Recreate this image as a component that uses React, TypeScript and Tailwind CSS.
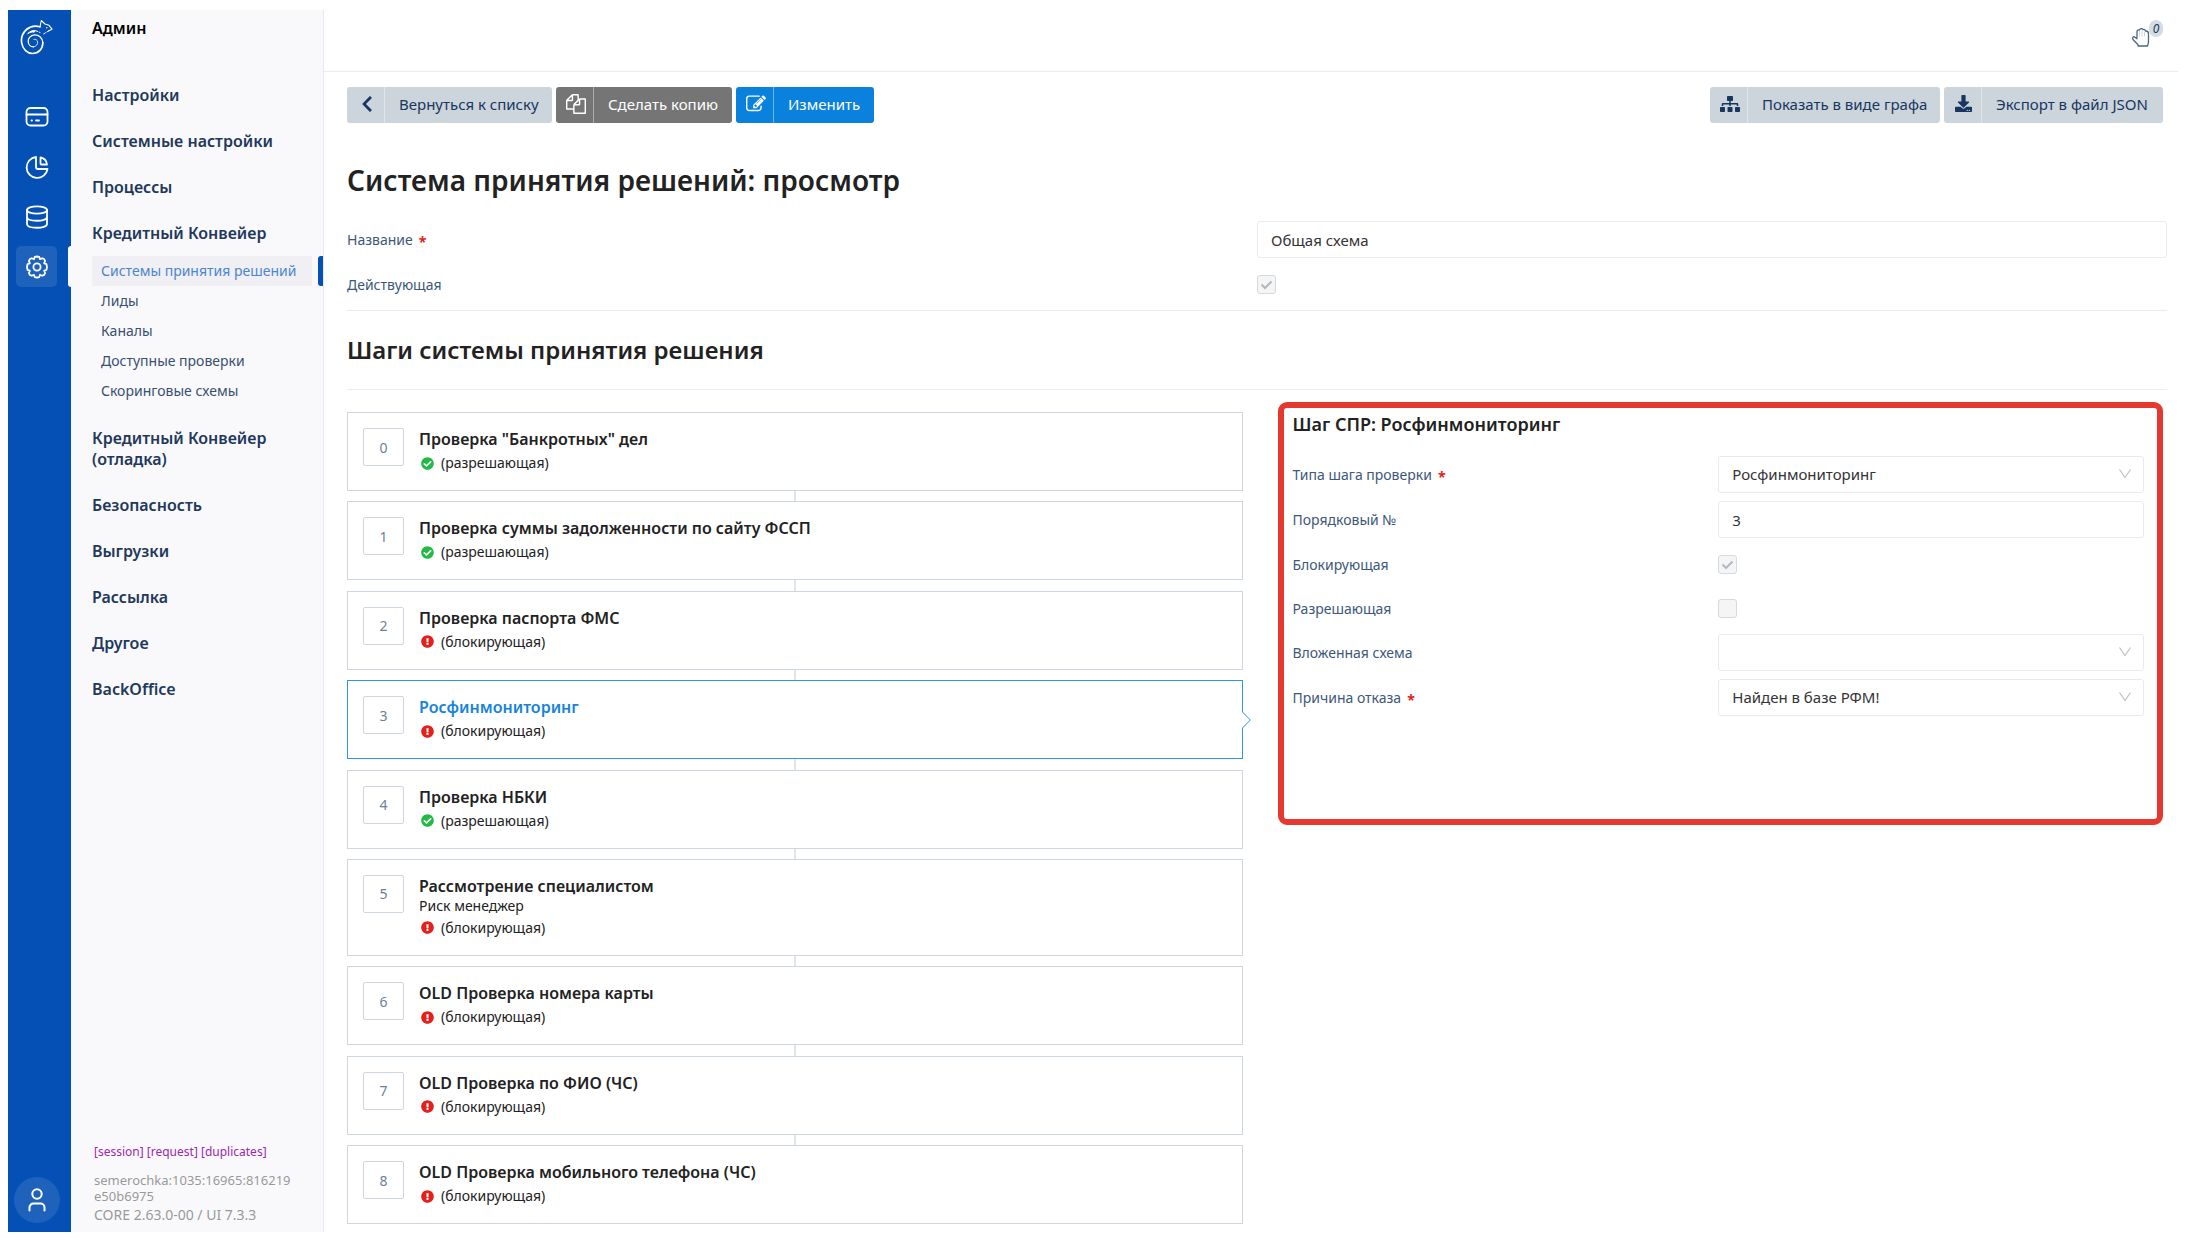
import React from 'react';
import { FaChevronLeft, FaSitemap, FaDownload, FaCheckCircle, FaExclamationCircle } from 'react-icons/fa';

const menu = [
  { title: 'Настройки' },
  { title: 'Системные настройки' },
  { title: 'Процессы' },
  {
    title: 'Кредитный Конвейер',
    items: ['Системы принятия решений', 'Лиды', 'Каналы', 'Доступные проверки', 'Скоринговые схемы']
  },
  { title: 'Кредитный Конвейер (отладка)' },
  { title: 'Безопасность' },
  { title: 'Выгрузки' },
  { title: 'Рассылка' },
  { title: 'Другое' },
  { title: 'BackOffice' }
];

const steps = [
  { title: 'Проверка "Банкротных" дел', blocking: false },
  { title: 'Проверка суммы задолженности по сайту ФССП', blocking: false },
  { title: 'Проверка паспорта ФМС', blocking: true },
  { title: 'Росфинмониторинг', blocking: true },
  { title: 'Проверка НБКИ', blocking: false },
  { title: 'Рассмотрение специалистом', role: 'Риск менеджер', blocking: true },
  { title: 'OLD Проверка номера карты', blocking: true },
  { title: 'OLD Проверка по ФИО (ЧС)', blocking: true },
  { title: 'OLD Проверка мобильного телефона (ЧС)', blocking: true }
];

const selectedStep = 3;

const Logo = () => (
  <svg viewBox="0 0 34 36" className="h-9 w-[34px]" fill="none" stroke="white" strokeLinecap="round" strokeLinejoin="round">
    <path strokeWidth="1.7" d="M20 7.800C16 6.600 10.500 7 6.500 10.500C2.500 14 1 18.500 1.600 23.500C2.600 30.500 7.500 34.500 12.500 34.500C18.500 34.300 23 30 22.800 23.500" />
    <path strokeWidth="1.3" d="M22.800 23.500C22.500 18.500 18.500 15.500 14.500 15.800C10.500 16.200 8 19.300 8.200 22.500C8.500 26 11 28 13.500 27.800" />
    <path strokeWidth="0.8" d="M13.500 27.800C16.500 27.400 18 25.200 17.600 22.800C17.200 20.800 15.500 19.800 13.800 20.300" />
    <path strokeWidth="1" fill="white" d="M8 14.500C10 12 13 11 15.500 11.800L14 13.200C12 12.600 10 13.200 8 14.500z" />
    <path strokeWidth="1.100" d="M20 7.800L21.300 1.500L25 5L29 6.300L32 10.200L28.500 12" />
    <path strokeWidth="1" strokeDasharray="2 1.600" d="M28.500 12L23.500 15M16 11.800L20 13.500" />
    <circle cx="26.800" cy="8.800" r=".7" fill="white" stroke="none" />
  </svg>
);

const CopyIcon = () => (
  <svg viewBox="0 0 1792 1792" className="h-5 w-5" fill="currentColor">
    <path d="M1696 384q40 0 68 28t28 68v1216q0 40-28 68t-68 28h-960q-40 0-68-28t-28-68v-288h-544q-40 0-68-28t-28-68v-672q0-40 20-88t48-76l408-408q28-28 76-48t88-20h416q40 0 68 28t28 68v328q68-40 128-40h416zm-544 213l-299 299h299v-299zm-640-384l-299 299h299v-299zm196 647l316-316v-416h-384v416q0 40-28 68t-68 28h-416v640h512v-256q0-40 20-88t48-76zm956 804v-1152h-384v416q0 40-28 68t-68 28h-416v640h896z" />
  </svg>
);

const EditIcon = () => (
  <svg viewBox="0 0 1792 1792" className="h-5 w-5" fill="currentColor">
    <path d="M888 1184l116-116-152-152-116 116v56h96v96h56zm440-720q-16-16-33 1l-350 350q-17 17-1 33t33-1l350-350q17-17 1-33zm80 594v190q0 119-84.5 203.5t-203.5 84.5h-832q-119 0-203.5-84.5t-84.5-203.5v-832q0-119 84.5-203.5t203.5-84.5h832q63 0 117 25 15 7 18 23 3 17-9 29l-49 49q-14 14-32 8-23-6-45-6h-832q-66 0-113 47t-47 113v832q0 66 47 113t113 47h832q66 0 113-47t47-113v-126q0-13 9-22l64-64q15-15 35-7t20 29zm-96-738l288 288-672 672h-288v-288zm444 132l-92 92-288-288 92-92q28-28 68-28t68 28l152 152q28 28 28 68t-28 68z" />
  </svg>
);

const HandIcon = () => (
  <svg viewBox="0 0 20 20" className="h-5 w-5" fill="none" strokeLinejoin="round" strokeLinecap="round">
    <path strokeWidth="0.8" stroke="#c3ccd6" d="M8.500 4.500V9M11 4V9M13.500 5V9" />
    <path strokeWidth="1.3" stroke="#4a6785" d="M6 10.500V4.500C6 3.200 7.500 2.800 8.500 3C9 1.300 11.200 1.300 11.800 2.600C13 2.200 14.300 2.800 14.500 4C16 4 17.500 4.800 17.500 6.500V14C17.500 16 17 17 16.500 19H7V17.800L2 12.500C.8 10.500 2.500 9 4 10.200L6 11.800" />
  </svg>
);

const railIcons = [
  {
    label: 'Заявки',
    path: (
      <>
        <rect x="1.500" y="3" width="21" height="17.500" rx="4" />
        <path d="M1.500 9.500h21M6.500 15.500h.5M11 15.500h3" />
      </>
    )
  },
  {
    label: 'Отчёты',
    path: (
      <>
        <path d="M11 2A10.500 10.500 0 1 0 22.500 14H13a2 2 0 0 1-2-2z" />
        <path d="M15.500 2.500A8 8 0 0 1 22 9.500h-5.500a1 1 0 0 1-1-1z" />
      </>
    )
  },
  {
    label: 'Данные',
    path: (
      <>
        <ellipse cx="12" cy="5" rx="10" ry="3.700" />
        <path d="M2 5v14c0 5 20 5 20 0V5M2 12c0 5 20 5 20 0" />
      </>
    )
  },
  {
    label: 'Админ',
    path: (
      <>
        <circle cx="12" cy="12" r="3.600" />
        <path d="M12 1.500l2.300.4.700 2.300 2.200-1 2 .9.900 2-1 2.200 2.300.7.600 3-.600 3-2.300.7 1 2.200-.9 2-2 .9-2.200-1-.7 2.300-2.300.4-2.300-.4-.7-2.300-2.200 1-2-.9-.9-2 1-2.200-2.300-.7-.6-3 .6-3 2.300-.7-1-2.200.9-2 2-.9 2.200 1 .7-2.300z" />
      </>
    )
  }
];

const Rail = () => (
  <nav className="flex w-[63px] shrink-0 flex-col items-start bg-[#0450b4] pt-[9px] pb-[9px]">
    <a href="#" aria-label="Главная" className="ml-3"><Logo /></a>
    <div className="mt-[41px] flex w-full flex-col gap-[9px]">
      {railIcons.map((icon) => (
        <div key={icon.label} className="flex pl-2">
          <a
            href="#"
            aria-label={icon.label}
            className={`flex h-[41px] w-[41px] items-center justify-center rounded-[5px] ${icon.label === 'Админ' ? 'bg-[#1e62bc]' : ''}`}>
            <svg viewBox="0 0 24 24" className="h-6 w-6" fill="none" stroke="white" strokeWidth="1.800" strokeLinecap="round" strokeLinejoin="round">
              {icon.path}
            </svg>
          </a>
          {icon.label === 'Админ' && <span className="ml-auto w-[3px] rounded-l-[3px] bg-[#f9f9fc]" />}
        </div>
      ))}
    </div>
    <a href="#" aria-label="Профиль" className="mt-auto ml-[6px] flex h-[46px] w-[46px] items-center justify-center rounded-full bg-[#1e62bc]">
      <svg viewBox="0 0 18 24" className="h-6 w-[18px]" fill="none" stroke="white" strokeWidth="2" strokeLinecap="round">
        <circle cx="9" cy="6" r="4.700" />
        <path d="M1.500 22.500v-3a4 4 0 0 1 4-4h7a4 4 0 0 1 4 4v3" />
      </svg>
    </a>
  </nav>
);

const Sidebar = () => (
  <aside className="flex w-[253px] shrink-0 flex-col border-r border-[#e8e8f2] bg-[#f9f9fc] pl-[21px]">
    <h2 className="mt-2 text-[16px] leading-[21px] font-semibold text-black">Админ</h2>
    <ul className="mt-[46px] flex flex-col gap-[25px] text-[16px] leading-[21px] font-semibold text-[#22385a]">
      {menu.map((group) => (
        <li key={group.title}>
          <a href="#" className="block w-[200px]">{group.title}</a>
          {group.items &&
          <ul className="mt-3 -mb-[3px] text-[14px] leading-[30px] font-normal text-[#3a5070]">
            {group.items.map((item, i) => (
              <li key={item} className="flex justify-between">
                <a href="#" className={`w-[220px] pl-[9px] whitespace-nowrap ${i === 0 ? 'bg-[#efeff4] text-[#4b86cf]' : ''}`}>{item}</a>
                {i === 0 && <span className="w-[5px] rounded-l-[3px] bg-[#0450b4]" />}
              </li>
            ))}
          </ul>
          }
        </li>
      ))}
    </ul>
    <div className="mt-auto pb-[9px] pl-[2px] text-[13px] leading-4 text-[#999]">
      <p className="mb-3 text-[12px] text-[#9c27b0]">
        <a href="#">[session]</a> <a href="#">[request]</a> <a href="#">[duplicates]</a>
      </p>
      <p>semerochka:1035:16965:816219<br />e50b6975</p>
      <p className="mt-[3px] text-[14px]">CORE 2.63.0-00 / UI 7.3.3</p>
    </div>
  </aside>
);

type ActionProps = { icon: React.ReactNode; children: string; className: string };

const Action = ({ icon, children, className }: ActionProps) => (
  <button type="button" className={`flex h-9 items-stretch overflow-hidden rounded-[3px] text-[15px] whitespace-nowrap ${className}`}>
    <span className="flex w-[38px] items-center justify-center border-r border-white/40 pb-[3px] pl-[2px]">{icon}</span>
    <span className="flex grow items-center pb-[2px] pl-[14px]">{children}</span>
  </button>
);

type RowProps = { id: string; label: string; required?: boolean; children: React.ReactNode };

const Row = ({ id, label, required, children }: RowProps) => (
  <div className="grid grid-cols-2 items-center">
    <label htmlFor={id} className="text-[14px] text-[#3d5878]">
      {label}
      {required && <span className="ml-[6px] align-[-2px] leading-none font-bold text-[#e3201b]">*</span>}
    </label>
    {children}
  </div>
);

const TextField = ({ id, value }: { id: string; value: string }) => (
  <input id={id} type="text" readOnly value={value} className="h-[37px] w-full rounded-[3px] border border-[#e6ebf0] bg-white px-[13px] text-[15px] text-[#333]" />
);

const SelectField = ({ id, value }: { id: string; value: string }) => (
  <div className="relative">
    <select id={id} defaultValue={value} className="block h-[37px] w-full appearance-none rounded-[3px] border border-[#e6ebf0] bg-white px-[13px] text-[15px] text-[#333]">
      <option>{value}</option>
    </select>
    <svg viewBox="0 0 12 10" className="pointer-events-none absolute top-[13px] right-[13px] h-[10px] w-3" fill="none" stroke="#bfbfbf" strokeWidth="1.200">
      <path d="M.5.5L6 8.500L11.500.5" />
    </svg>
  </div>
);

const CheckField = ({ id, checked }: { id: string; checked: boolean }) => (
  <div className="flex h-9 items-center">
    <span className="relative flex">
      <input id={id} type="checkbox" disabled defaultChecked={checked} className="h-[19px] w-[19px] appearance-none rounded-[3px] border border-[#d9d9d9] bg-[#f4f5f7]" />
      {checked &&
      <svg viewBox="0 0 19 19" className="pointer-events-none absolute inset-0 h-[19px] w-[19px]" fill="none" stroke="#b5b8bc" strokeWidth="2">
        <path d="M4.500 9.500L8 13L14.500 6.500" />
      </svg>
      }
    </span>
  </div>
);

type StepProps = { index: number; step: (typeof steps)[number] };

const StepCard = ({ index, step }: StepProps) => {
  const active = index === selectedStep;
  return (
    <div className={`relative flex gap-[15px] border px-[15px] pt-[15px] pb-4 ${active ? 'border-[#2e96e0]' : 'border-[#ced6df]'}`}>
      <span className="flex h-[38px] w-[41px] shrink-0 items-center justify-center rounded-[2px] border border-[#ced6df] text-[14px] text-[#6b8199]">
        {index}
      </span>
      <div>
        <h3 className={`text-[16px] leading-[22px] font-semibold ${active ? 'text-[#1683dc]' : 'text-[#222]'}`}>{step.title}</h3>
        {step.role && <p className="text-[14px] leading-[18px] text-[#222]">{step.role}</p>}
        <p className="flex items-center gap-[7px] pt-[3px] pb-px pl-[2px] text-[14px] leading-5 text-[#222]">
          {step.blocking ?
          <FaExclamationCircle className="h-[13px] w-[13px] text-[#e3201b]" /> :
          <FaCheckCircle className="h-[13px] w-[13px] text-[#21ba45]" />}
          {step.blocking ? '(блокирующая)' : '(разрешающая)'}
        </p>
      </div>
      {active &&
      <svg viewBox="0 0 9 16" className="absolute top-1/2 -right-[9px] -mt-2 h-4 w-[9px]" fill="white" stroke="#2e96e0">
        <path stroke="none" d="M0 0h1v16h-1z" />
        <path d="M.5 0L8.300 8L.5 16" />
      </svg>
      }
    </div>
  );
};

export default function App() {
  return (
    <div className="flex min-h-screen bg-white pt-[10px] pr-[14px] pb-2 pl-2 font-['Noto_Sans',sans-serif]">
      <Rail />
      <Sidebar />
      <main className="flex min-w-0 grow flex-col">
        <header className="flex h-[62px] items-start justify-end border-b border-[#e9eeee] pt-[10px] pr-[15px]">
          <button type="button" aria-label="Поднятые руки" className="flex">
            <span className="pt-[7px]"><HandIcon /></span>
            <span className="-ml-[2px] flex h-[17px] w-[14px] items-center justify-center rounded-full bg-[#d5dce4] text-[12px] italic text-[#22385a]">0</span>
          </button>
        </header>
        <div className="flex grow flex-col pt-[15px] pr-[11px] pb-2 pl-[23px]">
          <div className="flex gap-1 pr-1">
            <Action icon={<FaChevronLeft className="h-[18px] w-4" />} className="w-[205px] bg-[#ccd4dc] text-[#17375e]">Вернуться к списку</Action>
            <Action icon={<CopyIcon />} className="w-[176px] bg-[#757575] text-white">Сделать копию</Action>
            <Action icon={<EditIcon />} className="w-[138px] bg-[#0a82dd] text-white">Изменить</Action>
            <span className="grow" />
            <Action icon={<FaSitemap className="h-4 w-5" />} className="w-[230px] bg-[#ccd4dc] text-[#17375e]">Показать в виде графа</Action>
            <Action icon={<FaDownload className="h-[17px] w-[17px]" />} className="w-[219px] bg-[#ccd4dc] text-[#17375e]">Экспорт в файл JSON</Action>
          </div>

          <h1 className="mt-[39px] text-[28px] leading-9 font-semibold text-[#222]">Система принятия решений: просмотр</h1>
          <div className="mt-[23px] flex flex-col gap-2 border-b border-[#e6ecf2] pb-2">
            <Row id="name" label="Название" required><TextField id="name" value="Общая схема" /></Row>
            <Row id="active" label="Действующая"><CheckField id="active" checked /></Row>
          </div>

          <h2 className="border-b border-[#e9eeee] pt-[23px] pb-[23px] text-[24px] leading-8 font-semibold text-[#222]">Шаги системы принятия решения</h2>

          <div className="grid grow grid-cols-[897fr_885fr] gap-[35px] pt-3 pr-1">
            <div className="flex flex-col pt-[10px]">
              {steps.map((step, i) => (
                <React.Fragment key={step.title}>
                  {i > 0 && <span className="min-h-2 w-[2px] grow self-center bg-[#dfe5ea]" />}
                  <StepCard index={i} step={step} />
                </React.Fragment>
              ))}
            </div>
            <section className="h-[423px] rounded-[9px] border-[6px] border-[#e5392f] pt-1 pr-[13px] pl-2">
              <h3 className="text-[18px] leading-6 font-semibold text-[#222]">Шаг СПР: Росфинмониторинг</h3>
              <div className="mt-5 flex flex-col gap-2">
                <Row id="type" label="Типа шага проверки" required><SelectField id="type" value="Росфинмониторинг" /></Row>
                <Row id="order" label="Порядковый №"><TextField id="order" value="3" /></Row>
                <Row id="blocking" label="Блокирующая"><CheckField id="blocking" checked /></Row>
                <Row id="allowing" label="Разрешающая"><CheckField id="allowing" checked={false} /></Row>
                <Row id="nested" label="Вложенная схема"><SelectField id="nested" value="" /></Row>
                <Row id="reason" label="Причина отказа" required><SelectField id="reason" value="Найден в базе РФМ!" /></Row>
              </div>
            </section>
          </div>
        </div>
      </main>
    </div>
  );
}
